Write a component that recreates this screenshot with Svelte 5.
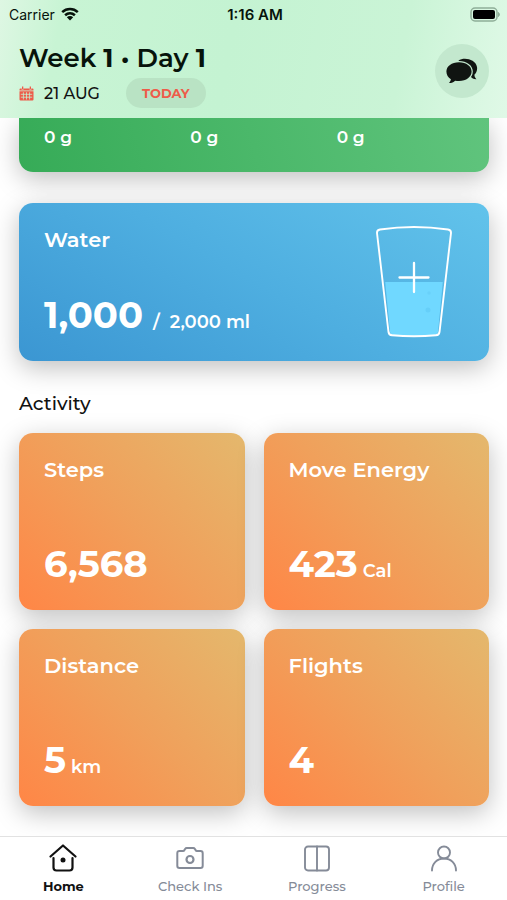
<script>
  const macros = ['0 g', '0 g', '0 g'];

  const activities = [
    { title: 'Steps', value: '6,568', unit: '' },
    { title: 'Move Energy', value: '423', unit: 'Cal' },
    { title: 'Distance', value: '5', unit: 'km' },
    { title: 'Flights', value: '4', unit: '' }
  ];

  const tabs = [
    { id: 'home', label: 'Home' },
    { id: 'checkins', label: 'Check Ins' },
    { id: 'progress', label: 'Progress' },
    { id: 'profile', label: 'Profile' }
  ];

  let activeTab = $state('home');
  let water = $state(1000);

  const goal = 2000;
  const format = (n) => n.toLocaleString('en-US');

  // The inside of the glass is 106 units high, filled from the bottom
  let waterTop = $derived(109 - 106 * Math.min(water / goal, 1));

  function addWater() {
    water = Math.min(water + 250, goal);
  }
</script>

<div class="app">
  <header>
    <div class="status-bar">
      <span class="carrier">
        Carrier
        <svg class="wifi" viewBox="0 0 18 14" aria-hidden="true">
          <path d="M1.2 5.2C5.7 1 12.3 1 16.8 5.2M4.1 8.3c2.9-2.6 6.9-2.6 9.8 0" fill="none" stroke="#07130b" stroke-width="2.5" />
          <path d="M5.8 10.2c1.9-1.6 4.5-1.6 6.4 0L9 13.6z" fill="#07130b" />
        </svg>
      </span>
      <span class="time">1:16 AM</span>
      <svg class="battery" viewBox="0 0 31 15" aria-hidden="true">
        <rect x="1" y="1" width="26" height="13" rx="4" fill="none" stroke="#8fae98" stroke-width="1.5" />
        <rect x="3" y="3" width="22" height="9" rx="2" fill="#000" />
        <path d="M28.5 5.5q2 2 0 4z" fill="#8fae98" stroke="#8fae98" />
      </svg>
    </div>

    <div class="title-row">
      <div class="title">
        <h1>Week <b>1</b> • Day <b>1</b></h1>
        <div class="date-row">
          <svg class="calendar" viewBox="0 0 15 15" aria-hidden="true">
            <path d="M.5 5.2h14v8.3q0 1-1 1h-12q-1 0-1-1zM.5 4.4v-1q0-1 1-1h1.2v1.4h1.8V2.4h6v1.4h1.8V2.4h1.2q1 0 1 1v1zM3 .5h1.3v2.8H3zM10.7.5H12v2.8h-1.3z" fill="#ee5b49" />
            <path d="M1.8 8.3h11.4M1.8 11.2h11.4M4.4 6.3v7.2M7.5 6.3v7.2M10.6 6.3v7.2" stroke="#c4f3d2" stroke-width="0.8" />
          </svg>
          <span class="date">21 AUG</span>
          <button class="today">TODAY</button>
        </div>
      </div>
      <button class="chat" aria-label="Messages">
        <svg viewBox="0 0 32 26" aria-hidden="true">
          <path d="M12.5 2.5C18-1 29.5 1 31 9c.5 3.2-.7 6-2.6 7.8.1 2 .9 3.3 2 4.4-2.6.1-4.7-1-5.900-2.600z" fill="#101411" />
          <path d="M13 4.3C5.700 4.300.4 8.300.4 13.600c0 3.300 1.700 5.900 4.500 7.600-.2 1.500-.9 2.700-2 3.800 2.500.1 4.700-.9 6.200-2.300 1.200.3 2.500.4 3.900.4 7.300 0 12.600-4.200 12.600-9.500S20.300 4.300 13 4.300z" fill="#101411" stroke="#c3e8ce" stroke-width="2.4" paint-order="stroke" />
        </svg>
      </button>
    </div>
  </header>

  <main>
    <section class="card macros">
      {#each macros as amount}
        <span>{amount}</span>
      {/each}
    </section>

    <section class="card water">
      <div class="card-text">
        <h3>Water</h3>
        <p class="amount"><strong>{format(water)}</strong><span class="slash">/</span><span>{format(goal)} ml</span></p>
      </div>
      <button class="glass" aria-label="Add water" onclick={addWater}>
        <svg viewBox="0 0 76 112" aria-hidden="true">
          <clipPath id="glass-inside">
            <path d="M4 2h68L62 106q-1 3-4 3-20 2-40 0-3 0-4-3z" />
          </clipPath>
          <rect x="0" y={waterTop} width="76" height="112" fill="#70d8ff" clip-path="url(#glass-inside)" />
          <circle cx="52" cy="84" r="2.5" fill="#66cff9" />
          <circle cx="53" cy="67" r="1.8" fill="#69d1fa" />
          <path d="M4 3.5q34-5 68 0 3.2.6 3 3.5L63.5 106q-.5 3-3.500 3.300-22 1.800-44 0-3-.3-3.500-3.300L1 7q-.2-2.900 3-3.500z" fill="none" stroke="#fff" stroke-width="1.9" />
          <path d="M38 37v29M23.5 51.5h29" stroke="#fff" stroke-width="2.3" stroke-linecap="round" />
        </svg>
      </button>
    </section>

    <h2>Activity</h2>

    <div class="activity-grid">
      {#each activities as item}
        <section class="card activity">
          <h3>{item.title}</h3>
          <p class="amount">
            <strong>{item.value}</strong>
            {#if item.unit}<span class="unit">{item.unit}</span>{/if}
          </p>
        </section>
      {/each}
    </div>
  </main>

  <nav>
    {#each tabs as tab}
      <button class="tab" class:active={activeTab === tab.id} onclick={() => (activeTab = tab.id)}>
        <svg viewBox="0 0 28 28" fill="none" stroke="currentColor" stroke-linecap="round" stroke-linejoin="round" aria-hidden="true">
          {#if tab.id === 'home'}
            <path d="M1.5 12.5L14 1.5l12.5 11M4.5 14v9.5q0 3 3 3h13q3 0 3-3V14" stroke-width="2.2" />
            <circle cx="14" cy="16" r="2.5" fill="currentColor" stroke="none" />
          {:else if tab.id === 'checkins'}
            <path d="M3.5 7H7q1 0 1.5-1l.6-1q.6-1 1.700-1h6.400q1.100 0 1.700 1l.6 1q.5 1 1.500 1h3.500q2.200 0 2.200 2.200v12.600q0 2.200-2.200 2.200h-21q-2.200 0-2.200-2.200V9.200Q1.300 7 3.500 7z" stroke-width="2" />
            <circle cx="14" cy="15.5" r="3.5" stroke-width="2.2" />
          {:else if tab.id === 'progress'}
            <rect x="2" y="2.5" width="24" height="24" rx="3" stroke-width="1.9" />
            <path d="M14 2.5v24" stroke-width="1.9" />
          {:else}
            <circle cx="14" cy="8.5" r="6" stroke-width="1.9" />
            <path d="M2 26.5c0-7 5-12 12-12s12 5 12 12" stroke-width="1.9" />
          {/if}
        </svg>
        <span>{tab.label}</span>
      </button>
    {/each}
  </nav>
</div>

<style>
  :global(body) {
    margin: 0;
    background: #fff;
  }
  .app {
    min-height: 100vh;
    display: flex;
    flex-direction: column;
    font-family: Montserrat, Inter, 'Open Sans', sans-serif;
    color: #111;
  }
  h1, h2, h3, p { margin: 0; }
  button {
    font-family: inherit;
    border: none;
    padding: 0;
    cursor: pointer;
  }

  /* --- Header --- */
  header {
    position: relative;
    z-index: 2;
    height: 118px;
    background: linear-gradient(100deg, #def7e3 0%, #c8f4d4 12%, #c4f3d2 45%, #caf4d6 78%, #e0f9e7 100%);
  }
  .status-bar {
    display: grid;
    grid-template-columns: 1fr auto 1fr;
    align-items: center;
    height: 28px;
    padding: 0 6px 0 9px;
    font-family: Inter, sans-serif;
    font-size: 14px;
    color: #07130b;
  }
  .carrier {
    display: flex;
    align-items: center;
    gap: 6px;
  }
  .wifi { width: 18px; height: 14px; }
  .time { font-size: 15px; font-weight: 600; }
  .battery { width: 31px; height: 15px; justify-self: end; }
  .title-row {
    display: flex;
    justify-content: space-between;
    align-items: center;
    padding: 0 18px 0 19px;
    height: 86px;
  }
  .title { padding-top: 8px; }
  h1 {
    font-size: 26px;
    line-height: 32px;
    font-weight: 600;
    color: #07130b;
  }
  h1 b { font-weight: 700; }
  .date-row {
    display: flex;
    align-items: center;
    margin-top: 4px;
  }
  .calendar { width: 15px; height: 15px; }
  .date {
    margin: 0 26px 0 10px;
    font-size: 16px;
    font-weight: 500;
  }
  .today {
    width: 80px;
    height: 30px;
    border-radius: 15px;
    background: #b9e3c4;
    color: #ee5b49;
    font-size: 13px;
    font-weight: 700;
  }
  .chat {
    display: grid;
    place-items: center;
    width: 54px;
    height: 54px;
    border-radius: 50%;
    background: #c3e8ce;
  }
  .chat svg { width: 32px; height: 26px; }

  /* --- Cards --- */
  main {
    flex: 1;
    padding: 0 18px 30px 19px;
  }
  .card {
    border-radius: 14px;
    color: #fff;
    box-shadow: 0 7px 26px rgba(0, 0, 0, 0.25);
  }
  .macros {
    display: grid;
    grid-template-columns: repeat(3, 1fr);
    height: 54px;
    padding: 0 6px 0 25px;
    box-sizing: border-box;
    border-radius: 0 0 14px 14px;
    background: linear-gradient(75deg, #36ab57 0%, #4bb86a 50%, #60c47d 100%);
    font-size: 17px;
    line-height: 38px;
    font-weight: 600;
  }
  .water {
    display: flex;
    justify-content: space-between;
    align-items: center;
    height: 158px;
    margin-top: 31px;
    padding-right: 37px;
    background: linear-gradient(30deg, #3b96d2 0%, #4eaee0 50%, #62c3eb 100%);
  }
  .card-text { height: 100%; }
  .card-text, .activity {
    display: flex;
    flex-direction: column;
    justify-content: space-between;
    box-sizing: border-box;
    padding: 24px 0 24px 25px;
  }
  h3 {
    font-size: 21px;
    line-height: 26px;
    font-weight: 600;
  }
  .amount {
    display: flex;
    align-items: baseline;
    font-size: 18px;
    line-height: 24px;
    font-weight: 600;
  }
  .amount strong {
    font-size: 37px;
    line-height: 44px;
    font-weight: 700;
  }
  .slash { margin: 0 10px; }
  .unit { margin-left: 5px; }
  .glass {
    width: 76px;
    height: 112px;
    background: none;
  }
  .glass svg { display: block; width: 100%; height: 100%; }
  h2 {
    margin: 31px 0 17px;
    font-size: 19px;
    line-height: 24px;
    font-weight: 500;
  }
  .activity-grid {
    display: grid;
    grid-template-columns: 1fr 1fr;
    gap: 19px;
  }
  .activity {
    height: 177px;
    background: linear-gradient(45deg, #ff8646 0%, #f0a05b 50%, #e4b86d 100%);
  }

  /* --- Tab bar --- */
  nav {
    position: relative;
    z-index: 2;
    display: grid;
    grid-template-columns: repeat(4, 1fr);
    height: 63px;
    border-top: 1px solid #e2e2e2;
    background: #fff;
  }
  .tab {
    display: flex;
    flex-direction: column;
    align-items: center;
    gap: 5px;
    padding-top: 7px;
    background: none;
    color: #858b98;
    font-size: 13px;
    line-height: 18px;
    font-weight: 500;
  }
  .tab svg { width: 28px; height: 28px; }
  .tab.active { color: #111; font-weight: 700; }
</style>
